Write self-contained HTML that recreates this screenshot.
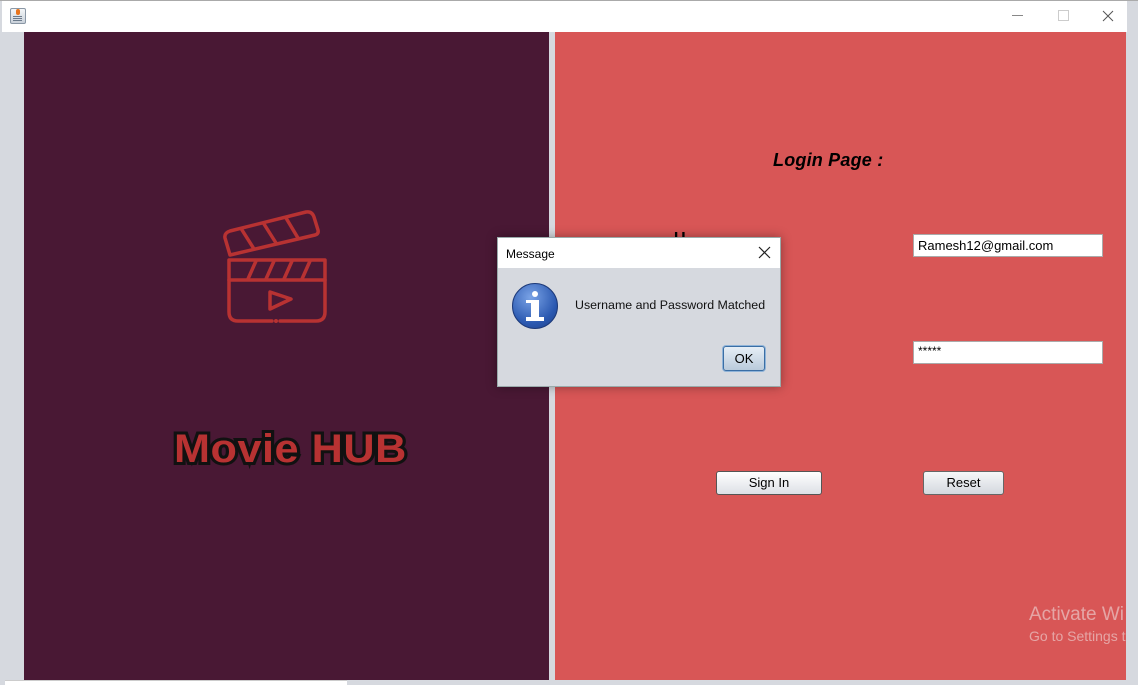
<!DOCTYPE html>
<html><head><meta charset="utf-8"><style>
*{margin:0;padding:0;box-sizing:border-box}
body{width:1138px;height:685px;position:relative;overflow:hidden;background:#d6d9df;font-family:"Liberation Sans",sans-serif}
.a{position:absolute}
</style></head><body>
<div class="a" style="left:0;top:0;width:1138px;height:1px;background:#aaa"></div>
<div class="a" style="left:2px;top:1px;width:1125px;height:31px;background:#fff"></div>
<div class="a" style="left:10px;top:8px;width:16px;height:16px;border:1px solid #8a97a5;border-radius:2px;background:linear-gradient(#f4f6f8,#c9d1da)"></div>
<div class="a" style="left:16px;top:9px;width:4px;height:6px;background:#e8741c;border-radius:2px"></div>
<div class="a" style="left:13px;top:16px;width:9px;height:1px;background:#6b7a8b;box-shadow:0 2px #6b7a8b,0 4px #6b7a8b"></div>
<div class="a" style="left:1012px;top:15px;width:11px;height:1px;background:#888"></div>
<div class="a" style="left:1058px;top:10px;width:11px;height:11px;border:1px solid #ccc"></div>
<svg class="a" style="left:1102px;top:10px" width="12" height="12"><path d="M1 1L11 11M11 1L1 11" stroke="#555" stroke-width="1"/></svg>
<div class="a" style="left:2px;top:32px;width:22px;height:648px;background:#d6d9df"></div>
<div class="a" style="left:24px;top:32px;width:525px;height:648px;background:#491834"></div>
<div class="a" style="left:549px;top:32px;width:6px;height:648px;background:#d6d9df"></div>
<div class="a" style="left:555px;top:32px;width:571px;height:648px;background:#d85656"></div>
<div class="a" style="left:1126px;top:32px;width:12px;height:648px;background:#d6d9df"></div>
<div class="a" style="left:5px;top:680px;width:342px;height:5px;background:#fff;border-top:1px solid #ccc"></div>
<svg class="a" style="left:220px;top:208px" width="112" height="120" viewBox="0 0 112 120">
<g fill="none" stroke="#b83232" stroke-width="3.5" stroke-linecap="round" stroke-linejoin="round">
<path d="M10 47 L5 30 Q4 25 10 23 L86 4 Q92 3 94 9 L98 22 Q99 26 95 27 Z"/>
<path d="M22 22 L34 41 M44 16 L56 35 M66 10 L78 30"/>
<path d="M52 113 H18 Q9 113 9 104 V52 H105 V104 Q105 113 96 113 H60"/>
<path d="M9 72 H105"/>
<path d="M28 71 L36 53 M46 71 L54 53 M64 71 L72 53 M82 71 L90 53"/>
<path d="M50 84 V101 L71 91 Z"/>
</g><circle cx="56" cy="113" r="2" fill="#b83232"/></svg>
<div class="a" style="left:174px;top:427px;font-size:40px;font-weight:900;color:#b83232;letter-spacing:0.5px;font-family:'Liberation Sans',sans-serif;-webkit-text-stroke:6px #111;paint-order:stroke fill;transform:scaleX(1.08);transform-origin:left;white-space:nowrap">Movie HUB</div>
<div class="a" style="left:773px;top:150px;font-size:18px;font-weight:bold;font-style:italic;font-family:'Liberation Sans',sans-serif;color:#000;letter-spacing:0.2px">Login Page :</div>
<div class="a" style="left:674px;top:230px;font-size:16px;font-weight:bold;color:#000">U</div>
<div class="a" style="left:913px;top:234px;width:190px;height:23px;background:#fff;border:1px solid #aaa;font-size:13px;padding:3px 0 0 4px">Ramesh12@gmail.com</div>
<div class="a" style="left:913px;top:341px;width:190px;height:23px;background:#fff;border:1px solid #aaa;font-size:12px;padding:2px 0 0 4px">*****</div>
<div class="a" style="left:716px;top:471px;width:106px;height:24px;border:1px solid #555;border-radius:3px;background:linear-gradient(#fff,#dde0e6);font-size:13px;text-align:center;line-height:22px">Sign In</div>
<div class="a" style="left:923px;top:471px;width:81px;height:24px;border:1px solid #666;border-radius:3px;background:linear-gradient(#f6f7f9,#d4d8de);font-size:13px;text-align:center;line-height:22px">Reset</div>
<div class="a" style="left:1029px;top:604px;font-size:19px;color:rgba(235,200,200,.7);white-space:nowrap">Activate Wi</div>
<div class="a" style="left:1029px;top:628px;font-size:14px;color:rgba(235,200,200,.7);white-space:nowrap">Go to Settings t</div>
<div class="a" style="left:497px;top:237px;width:284px;height:150px;border:1px solid #9aa;background:#d6d9df;box-shadow:0 0 10px rgba(0,0,0,.35)">
<div style="height:30px;background:#fff;font-size:12px;padding:9px 0 0 8px;position:relative">Message<svg style="position:absolute;right:9px;top:8px" width="13" height="13"><path d="M1 1L12 12M12 1L1 12" stroke="#222" stroke-width="1.2"/></svg></div>
<div class="a" style="left:14px;top:45px;width:46px;height:46px;border-radius:50%;background:radial-gradient(circle at 40% 30%,#7aa3e6,#2a58b0 65%,#1e3f85);border:1px solid #1d3a7a"></div>
<div class="a" style="left:34px;top:53px;width:6px;height:6px;border-radius:50%;background:#fff"></div>
<div class="a" style="left:33px;top:62px;width:8px;height:18px;background:#fff"></div>
<div class="a" style="left:28px;top:79px;width:18px;height:4px;background:#fff"></div>
<div class="a" style="left:28px;top:62px;width:6px;height:3px;background:#fff"></div>
<div class="a" style="left:77px;top:60px;font-size:12.4px;color:#111">Username and Password Matched</div>
<div class="a" style="left:225px;top:108px;width:42px;height:25px;border:1px solid #3a6ea5;border-radius:3px;background:linear-gradient(#e6eef6,#b9cadb);font-size:13px;text-align:center;line-height:23px;box-shadow:0 0 0 1px #8fb3d8">OK</div>
</div>
</body></html>
